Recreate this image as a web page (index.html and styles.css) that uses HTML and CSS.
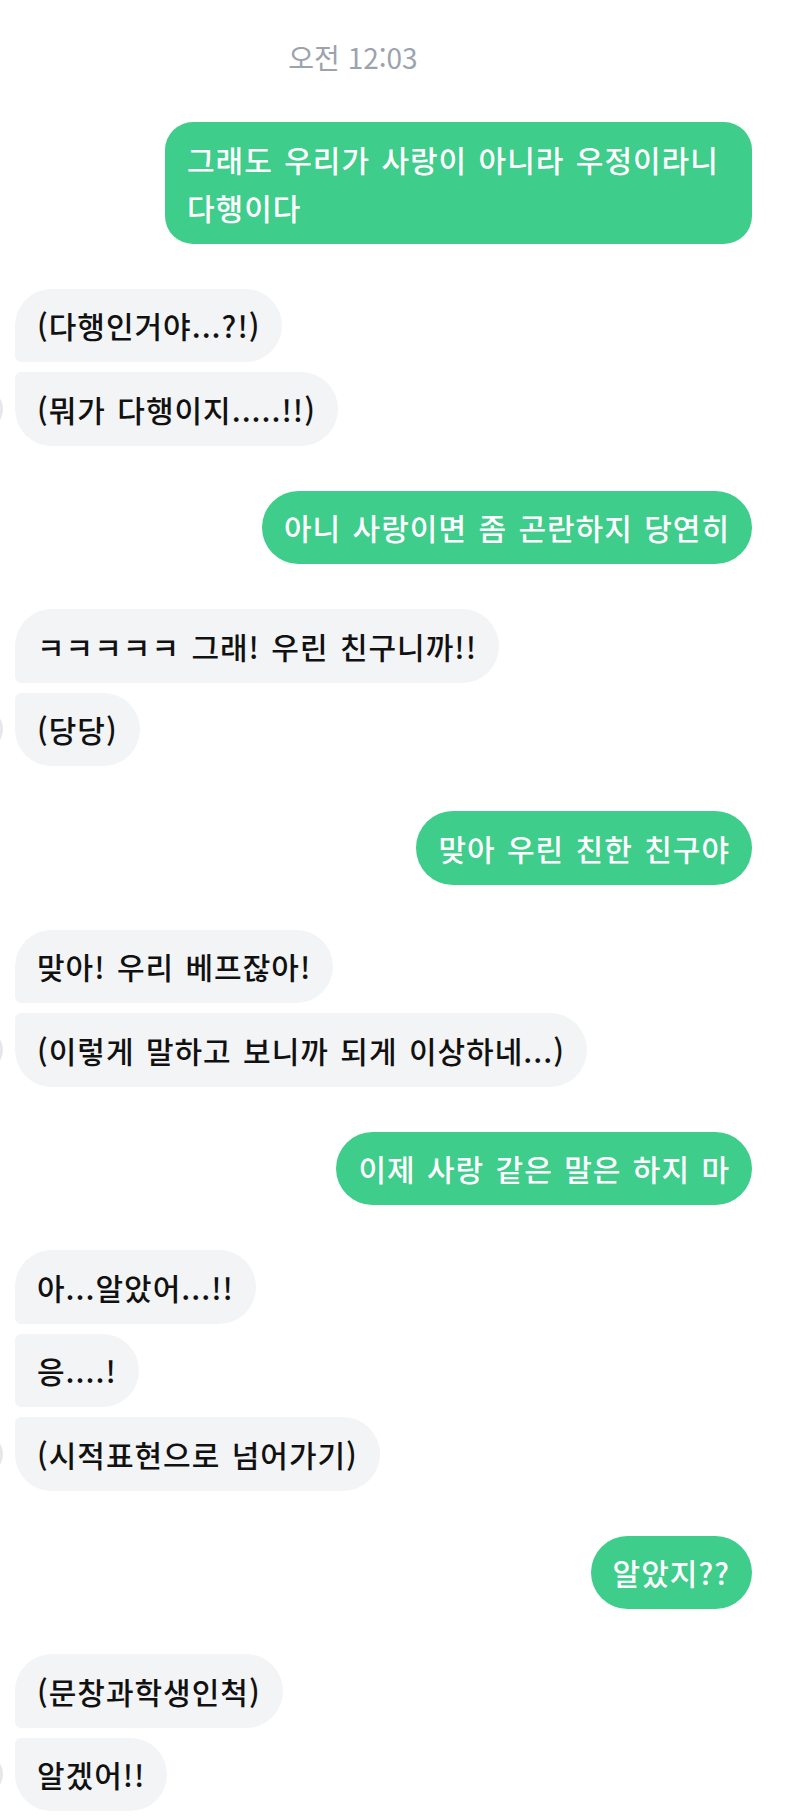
FILE: index.html
```html
<!DOCTYPE html>
<html lang="ko">
<head>
  <meta charset="UTF-8">
  <title>채팅</title>
  <link rel="stylesheet" href="styles.css">
</head>
<body>
  <div class="chat">
    <div class="time">오전 12:03</div>

    <div class="group me">
      <div class="msg multi">그래도 우리가 사랑이 아니라 우정이라니 다행이다</div>
    </div>

    <div class="group them">
      <div class="row"><span class="avatar blank"></span><div class="msg">(다행인거야...?!)</div></div>
      <div class="row"><span class="avatar"></span><div class="msg">(뭐가 다행이지.....!!)</div></div>
    </div>

    <div class="group me">
      <div class="msg">아니 사랑이면 좀 곤란하지 당연히</div>
    </div>

    <div class="group them">
      <div class="row"><span class="avatar blank"></span><div class="msg">ㅋㅋㅋㅋㅋ 그래! 우린 친구니까!!</div></div>
      <div class="row"><span class="avatar"></span><div class="msg">(당당)</div></div>
    </div>

    <div class="group me">
      <div class="msg">맞아 우린 친한 친구야</div>
    </div>

    <div class="group them">
      <div class="row"><span class="avatar blank"></span><div class="msg">맞아! 우리 베프잖아!</div></div>
      <div class="row"><span class="avatar"></span><div class="msg">(이렇게 말하고 보니까 되게 이상하네...)</div></div>
    </div>

    <div class="group me">
      <div class="msg">이제 사랑 같은 말은 하지 마</div>
    </div>

    <div class="group them">
      <div class="row"><span class="avatar blank"></span><div class="msg">아...알았어...!!</div></div>
      <div class="row"><span class="avatar blank"></span><div class="msg">응....!</div></div>
      <div class="row"><span class="avatar"></span><div class="msg">(시적표현으로 넘어가기)</div></div>
    </div>

    <div class="group me">
      <div class="msg">알았지??</div>
    </div>

    <div class="group them">
      <div class="row"><span class="avatar blank"></span><div class="msg">(문창과학생인척)</div></div>
      <div class="row"><span class="avatar"></span><div class="msg">알겠어!!</div></div>
    </div>
  </div>
</body>
</html>
```

FILE: styles.css
```css
body {
  margin: 0;
  background: #ffffff;
  font-family: "Noto Sans CJK KR", "Noto Sans", sans-serif;
  overflow-x: hidden;
}

.chat {
  display: flex;
  flex-direction: column;
  gap: 45px;
  padding: 37px 48px 0 0;
}

.time {
  text-align: center;
  padding-right: 46px;
  font-size: 28px;
  line-height: 40px;
  color: #9ca3af;
}

.group {
  display: flex;
  flex-direction: column;
  gap: 10px;
}

.group.me {
  align-items: flex-end;
}

.group.them {
  align-items: flex-start;
}

.row {
  display: flex;
  align-items: center;
  gap: 12px;
}

.avatar {
  flex: none;
  width: 40px;
  height: 40px;
  margin-left: -37px;
  border-radius: 50%;
  background: #e5e7eb;
}

.avatar.blank {
  visibility: hidden;
}

.msg {
  max-width: 587px;
  box-sizing: border-box;
  padding: 12.75px 22px;
  font-size: 30px;
  font-weight: 500;
  line-height: 48px;
  letter-spacing: 1px;
  word-spacing: 2px;
  word-break: keep-all;
  border-radius: 37px;
}

.msg.multi {
  border-radius: 28px;
  width: 587px;
}

.me .msg {
  background: #3ecd8a;
  color: #ffffff;
}

.them .msg {
  background: #f3f4f6;
  color: #111111;
}

.them .row:not(:last-child) .msg {
  border-bottom-left-radius: 6px;
}

.them .row + .row .msg {
  border-top-left-radius: 6px;
}
```
